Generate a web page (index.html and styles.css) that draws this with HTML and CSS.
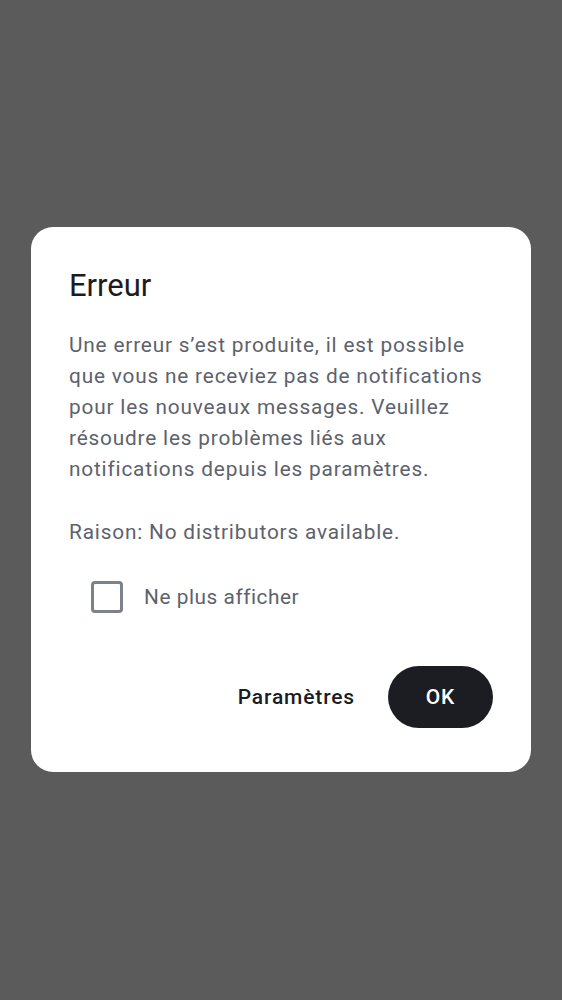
FILE: index.html
```html
<!DOCTYPE html>
<html lang="fr">
<head>
<meta charset="utf-8">
<title>Erreur</title>
<link rel="stylesheet" href="styles.css">
</head>
<body>
<div class="scrim">
  <div class="dialog" role="dialog">
    <h1 class="title">Erreur</h1>
    <p class="message">Une erreur s’est produite, il est possible que vous ne receviez pas de notifications pour les nouveaux messages. Veuillez résoudre les problèmes liés aux notifications depuis les paramètres.</p>
    <p class="message reason">Raison: No distributors available.</p>
    <label class="check-row">
      <span class="checkbox"></span>
      <span class="check-label">Ne plus afficher</span>
    </label>
    <div class="actions">
      <button class="btn-text">Paramètres</button>
      <button class="btn-filled">OK</button>
    </div>
  </div>
</div>
</body>
</html>
```
FILE: styles.css
```css
html, body {
  margin: 0;
  padding: 0;
}
body {
  width: 562px;
  height: 1000px;
  background: #5b5b5b;
  font-family: Roboto, "Noto Sans", sans-serif;
}
.scrim {
  height: 1000px;
  padding-top: 227px;
  box-sizing: border-box;
}
.dialog {
  margin-left: 31px;
  width: 500px;
  height: 545px;
  box-sizing: border-box;
  background: #ffffff;
  border-radius: 22px;
  padding: 38px 38px 44px 38px;
  display: flex;
  flex-direction: column;
}
.title {
  margin: 0;
  font-size: 31px;
  line-height: 41.6px;
  font-weight: 400;
  color: #1b1c20;
}
.message {
  margin: 23px 0 0 0;
  font-size: 20.8px;
  line-height: 31.2px;
  color: #5d626c;
  letter-spacing: 0.82px;
}
.reason {
  margin-top: 31.2px;
}
.check-row {
  margin-top: 18px;
  height: 62px;
  display: flex;
  align-items: center;
  padding-left: 22px;
  gap: 21px;
}
.checkbox {
  width: 32px;
  height: 32px;
  box-sizing: border-box;
  border: 3px solid #7b828c;
  border-radius: 4px;
}
.check-label {
  font-size: 20.8px;
  color: #5d626c;
  letter-spacing: 0.55px;
}
.actions {
  margin-top: auto;
  display: flex;
  justify-content: flex-end;
  align-items: center;
  gap: 12px;
}
.btn-text,
.btn-filled {
  font-family: Roboto, "Noto Sans", sans-serif;
  font-size: 21px;
  font-weight: 500;
  letter-spacing: 0.85px;
  height: 62px;
  border: none;
  border-radius: 31px;
  cursor: pointer;
}
.btn-text {
  background: transparent;
  color: #1b1c20;
  padding: 0 21px;
}
.btn-filled {
  background: #1c1d22;
  color: #ffffff;
  width: 105px;
  padding: 0;
}
```
